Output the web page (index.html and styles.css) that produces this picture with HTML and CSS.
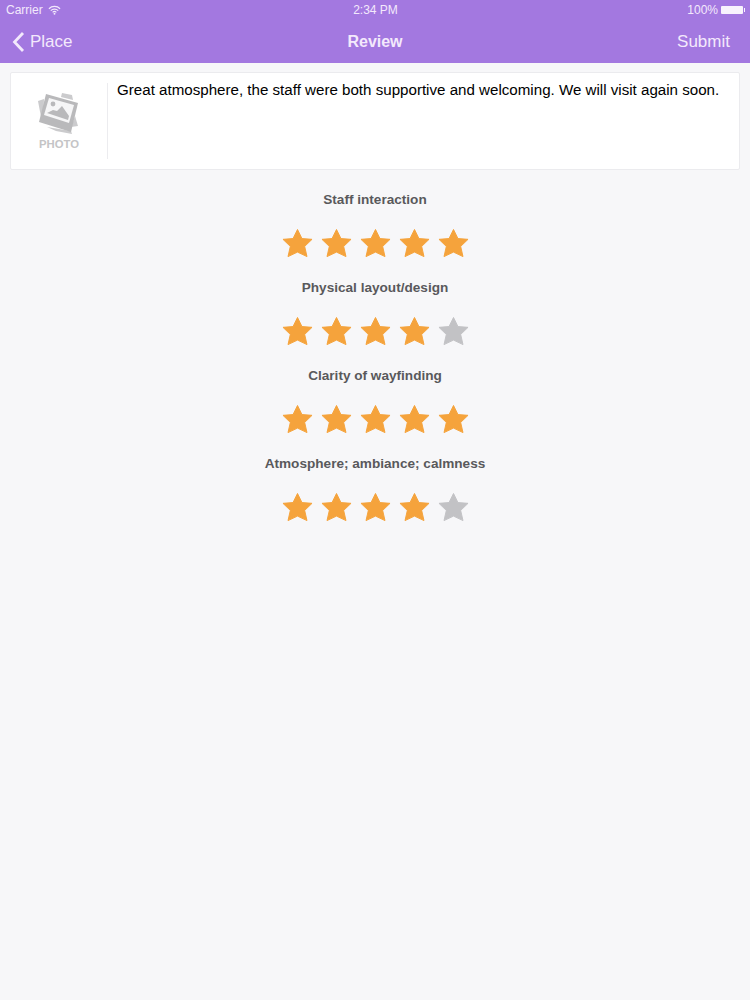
FILE: index.html
```html
<!DOCTYPE html>
<html lang="en">
<head>
    <meta charset="UTF-8">
    <title>Review</title>
    <link rel="stylesheet" href="styles.css">
</head>
<body>
    <svg class="defs" width="0" height="0">
        <symbol id="star" viewBox="0 0 32 32">
            <path d="M16 1.5l4.6 9.4 10.4.8-7.6 7.3 2.4 10.5-9.8-4.6-9.8 4.6 2.4-10.5L1 11.7l10.4-.8z"/>
        </symbol>
    </svg>
    <header class="top-bar">
        <div class="status-bar">
            <div class="status-left">
                <span>Carrier</span>
                <svg class="wifi" width="13" height="10" viewBox="0 0 14 10">
                    <path d="M1 3.6a8.6 8.6 0 0 1 12 0M3 5.6a5.7 5.7 0 0 1 8 0M5 7.5a2.9 2.9 0 0 1 4 0" fill="none" stroke="#f3e9fc" stroke-width="1.3"/>
                    <circle cx="7" cy="9" r="1" fill="#f3e9fc"/>
                </svg>
            </div>
            <div class="status-time">2:34 PM</div>
            <div class="status-right">
                <span>100%</span>
                <span class="battery"></span>
            </div>
        </div>
        <nav class="nav-bar">
            <div class="nav-back">
                <svg width="13" height="22" viewBox="0 0 13 22">
                    <path d="M11 2L2.5 11l8.5 9" fill="none" stroke="#f3e9fc" stroke-width="2.8"/>
                </svg>
                <span>Place</span>
            </div>
            <div class="nav-title">Review</div>
            <div class="nav-action">Submit</div>
        </nav>
    </header>

    <section class="review-card">
        <div class="photo-box">
            <svg class="photo-icon" width="44" height="44" viewBox="0 0 44 44">
                <path d="M1 9l6-2-1 22-1 1z" fill="#cbcbcd"/>
                <path d="M25 1l10 2 1 5-12-3z" fill="#cbcbcd"/>
                <path d="M38 24l3 10-7 1z" fill="#cbcbcd"/>
                <path d="M10 35l24 4 1 3-16-3z" fill="#cbcbcd"/>
                <path d="M9 2l32 9-7 29-32-10z" fill="#b9b9bb"/>
                <path d="M12 6l25 7-5 18-25-8z" fill="#f6f6f7"/>
                <circle cx="16" cy="12" r="2.4" fill="#b9b9bb"/>
                <path d="M10 21l6-3 4 1 5-5 7 10-1 4z" fill="#b9b9bb"/>
            </svg>
            <div class="photo-label">PHOTO</div>
        </div>
        <p class="review-text">Great atmosphere, the staff were both supportive and welcoming. We will visit again soon.</p>
    </section>

    <main class="ratings">
        <div class="rating">
            <h2>Staff interaction</h2>
            <div class="stars">
                <svg class="star on"><use href="#star"/></svg>
                <svg class="star on"><use href="#star"/></svg>
                <svg class="star on"><use href="#star"/></svg>
                <svg class="star on"><use href="#star"/></svg>
                <svg class="star on"><use href="#star"/></svg>
            </div>
        </div>
        <div class="rating">
            <h2>Physical layout/design</h2>
            <div class="stars">
                <svg class="star on"><use href="#star"/></svg>
                <svg class="star on"><use href="#star"/></svg>
                <svg class="star on"><use href="#star"/></svg>
                <svg class="star on"><use href="#star"/></svg>
                <svg class="star"><use href="#star"/></svg>
            </div>
        </div>
        <div class="rating">
            <h2>Clarity of wayfinding</h2>
            <div class="stars">
                <svg class="star on"><use href="#star"/></svg>
                <svg class="star on"><use href="#star"/></svg>
                <svg class="star on"><use href="#star"/></svg>
                <svg class="star on"><use href="#star"/></svg>
                <svg class="star on"><use href="#star"/></svg>
            </div>
        </div>
        <div class="rating">
            <h2>Atmosphere; ambiance; calmness</h2>
            <div class="stars">
                <svg class="star on"><use href="#star"/></svg>
                <svg class="star on"><use href="#star"/></svg>
                <svg class="star on"><use href="#star"/></svg>
                <svg class="star on"><use href="#star"/></svg>
                <svg class="star"><use href="#star"/></svg>
            </div>
        </div>
    </main>
</body>
</html>
```

FILE: styles.css
```css
html, body {
    height: 100%;
}
body {
    margin: 0;
    min-height: 1000px;
    box-sizing: border-box;
    font-family: "Liberation Sans", Arial, sans-serif;
    background-color: #f7f7f9;
    color: #000;
}
.defs {
    display: block;
    height: 0;
}
.top-bar {
    height: 63px;
    background-color: #a378e0;
    color: #f3e9fc;
}
.status-bar {
    height: 20px;
    padding: 0 5px 0 6px;
    display: grid;
    grid-template-columns: 1fr auto 1fr;
    align-items: center;
    font-size: 12px;
}
.status-left {
    display: flex;
    align-items: center;
    gap: 5px;
}
.status-right {
    display: flex;
    justify-content: flex-end;
    align-items: center;
    gap: 3px;
}
.battery {
    position: relative;
    width: 22px;
    height: 8px;
    margin-right: 2px;
    background-color: #f8f2fd;
    border-radius: 1px;
}
.battery::after {
    content: "";
    position: absolute;
    right: -2px;
    top: 2px;
    width: 1px;
    height: 4px;
    background-color: #f8f2fd;
}
.nav-bar {
    height: 43px;
    padding: 0 20px;
    display: grid;
    grid-template-columns: 1fr auto 1fr;
    align-items: center;
    font-size: 17px;
}
.nav-back {
    margin-left: -8px;
    display: flex;
    align-items: center;
    gap: 5px;
}
.nav-title {
    font-weight: bold;
    font-size: 16px;
}
.nav-action {
    text-align: right;
}
.review-card {
    margin: 9px 10px 0;
    height: 98px;
    box-sizing: border-box;
    padding: 10px 0;
    display: flex;
    background-color: #fff;
    border: 1px solid #ebebee;
    border-radius: 2px;
}
.photo-box {
    width: 97px;
    flex-shrink: 0;
    border-right: 1px solid #ececef;
    display: flex;
    flex-direction: column;
    align-items: center;
    padding-top: 9px;
    box-sizing: border-box;
}
.photo-label {
    margin-top: 2px;
    font-size: 11.3px;
    font-weight: bold;
    color: #c4c4c6;
}
.review-text {
    margin: -3px 0 0 9px;
    font-size: 15.13px;
    line-height: 20px;
}
.ratings {
    padding-top: 21px;
}
.rating {
    height: 88px;
    text-align: center;
}
.rating h2 {
    margin: 0;
    font-size: 13.6px;
    line-height: 18px;
    font-weight: bold;
    color: #59595c;
}
.stars {
    margin-top: 19px;
    display: flex;
    justify-content: center;
    gap: 8px;
}
.star {
    width: 31px;
    height: 31px;
    fill: #c2c2c5;
    stroke: #c2c2c5;
    stroke-width: 1px;
    stroke-linejoin: round;
}
.star.on {
    fill: #f5a33c;
    stroke: #f5a33c;
}
```
